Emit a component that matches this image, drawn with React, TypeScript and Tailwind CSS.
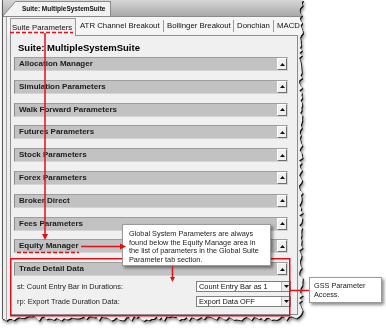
import React from 'react';

const sections = [
  'Allocation Manager',
  'Simulation Parameters',
  'Walk Forward Parameters',
  'Futures Parameters',
  'Stock Parameters',
  'Forex Parameters',
  'Broker Direct',
  'Fees Parameters',
  'Equity Manager',
];

// jagged "torn paper" outline for the right and bottom edges of the window grab
function tornEdge(): string {
  let s = 11;
  const rnd = () => {
    s = (s * 9301 + 49297) % 233280;
    return s / 233280;
  };
  const W = 301;
  const H = 322;
  const pts: string[] = ['0px 0px', `${W}px 0px`];
  for (let y = 3; y <= H - 6; y += 2.5) pts.push(`${(W - 4 + rnd() * 4).toFixed(1)}px ${y}px`);
  for (let x = W - 4; x >= 0; x -= 2.5) pts.push(`${x}px ${(H - 6 + rnd() * 5).toFixed(1)}px`);
  pts.push(`0px ${H - 3}px`);
  return `polygon(${pts.join(',')})`;
}

function UpButton() {
  return (
    <div className="w-[10px] h-[12px] bg-[#f0f0f0] border border-t-white border-l-white border-r-[#6e6e6e] border-b-[#6e6e6e] flex items-center justify-center">
      <svg width="5" height="3" viewBox="0 0 5 3">
        <polygon points="0,3 5,3 2.5,0" fill="#111" />
      </svg>
    </div>
  );
}

function SectionBar({ label }: { label: string }) {
  return (
    <div className="h-[14px] bg-[#c2c2c2] border border-t-[#9d9d9d] border-l-[#8c8c8c] border-r-[#d4d4d4] border-b-[#d4d4d4] flex items-center justify-between pl-[4px]">
      <span className="text-[8px] font-bold text-[#1c1c1c] leading-none">{label}</span>
      <UpButton />
    </div>
  );
}

function Dropdown({ value }: { value: string }) {
  return (
    <div className="w-[95px] h-[11.5px] bg-white border border-[#7f7f7f] flex items-center justify-between pl-[2px]">
      <span className="text-[7.4px] leading-none text-[#111]">{value}</span>
      <div className="w-[9px] h-full bg-[#ececec] border-l border-[#bdbdbd] flex items-center justify-center">
        <svg width="5" height="3" viewBox="0 0 5 3">
          <polygon points="0,0 5,0 2.5,3" fill="#111" />
        </svg>
      </div>
    </div>
  );
}

export default function App() {
  return (
    <div className="relative w-[386px] h-[329px] bg-white overflow-hidden font-['Liberation_Sans',Arial,sans-serif]">
      {/* window grab with torn edge + shadow */}
      <div className="ml-[2px] [filter:drop-shadow(1px_1px_0.5px_rgba(0,0,0,0.9))_drop-shadow(1.5px_2px_1.5px_rgba(0,0,0,0.45))]">
        <div
          className="w-[301px] h-[322px] bg-[#ededed] border-l border-[#5c5c5c] flex flex-col"
          style={{ clipPath: tornEdge() }}
        >
          {/* title strip */}
          <div className="h-[17px] flex items-end bg-gradient-to-b from-[#d6d6d6] to-[#a9a9a9] border-b border-[#8a8a8a]">
            <svg width="12" height="15" viewBox="0 0 12 15" className="shrink-0">
              <polygon points="0,15 12,1 12,15" fill="#f2f2f2" />
              <line x1="0" y1="15" x2="12" y2="1" stroke="#8a8a8a" strokeWidth="1" />
            </svg>
            <div className="h-[15px] w-[96px] bg-[#f2f2f2] border-t border-r border-[#8a8a8a] flex items-center pl-[7px]">
              <span className="text-[6.5px] font-bold text-[#111] leading-none">Suite: MultipleSystemSuite</span>
            </div>
          </div>

          {/* body */}
          <div className="flex-1 ml-[3px] border-l border-[#a5a5a5] flex flex-col">
            {/* tabs */}
            <div className="h-[18px] flex items-stretch pl-[3px] bg-[#f5f5f5]">
              <div className="relative z-10 w-[66px] -mb-[1px] mt-[1px] bg-[#f0f0f0] border border-b-0 border-[#9a9a9a] flex items-center pl-[1px]">
                <span className="text-[7.8px] text-[#111] leading-none">Suite Parameters</span>
              </div>
              <div className="w-[87px] flex items-center pl-[4px]">
                <span className="text-[7.8px] text-[#111] leading-none">ATR Channel Breakout</span>
              </div>
              <div className="w-[70px] my-[3px] border-l border-[#9a9a9a] flex items-center pl-[3px]">
                <span className="text-[7.8px] text-[#111] leading-none">Bollinger Breakout</span>
              </div>
              <div className="w-[40px] my-[3px] border-l border-[#9a9a9a] flex items-center pl-[3px]">
                <span className="text-[7.8px] text-[#111] leading-none">Donchian</span>
              </div>
              <div className="flex-1 my-[3px] border-l border-[#9a9a9a] flex items-center pl-[3px]">
                <span className="text-[7.8px] text-[#111] leading-none whitespace-nowrap">MACD</span>
              </div>
            </div>

            {/* panel */}
            <div className="ml-[3px] w-[288px] bg-[#f0f0f0] border border-[#8e8e8e] pl-[3px] pr-[9px] pt-[5.5px] pb-[7px]">
              <div className="h-[12px] flex items-center pl-[4px] mb-[3.5px]">
                <span className="text-[9.5px] font-bold text-black leading-none">Suite: MultipleSystemSuite</span>
              </div>
              <div className="flex flex-col gap-[8.8px]">
                {sections.map((s) => (
                  <SectionBar key={s} label={s} />
                ))}
                <div className="flex flex-col">
                  <SectionBar label="Trade Detail Data" />
                  <div className="mt-[4.8px] flex flex-col gap-[3.5px] pl-[3px] mr-[-3px]">
                    <div className="flex items-center justify-between">
                      <span className="text-[7.4px] text-[#1a1a1a] leading-none">st: Count Entry Bar in Durations:</span>
                      <Dropdown value="Count Entry Bar as 1" />
                    </div>
                    <div className="flex items-center justify-between">
                      <span className="text-[7.4px] text-[#1a1a1a] leading-none">rp: Export Trade Duration Data:</span>
                      <Dropdown value="Export Data OFF" />
                    </div>
                  </div>
                </div>
              </div>
            </div>
          </div>
        </div>
      </div>

      {/* red frame round the trade detail block */}
      <svg className="absolute left-0 top-0 pointer-events-none" width="386" height="329">
        <rect x="10.75" y="258.75" width="279" height="57" fill="none" stroke="#e3101a" strokeWidth="1.5" />
      </svg>

      {/* callouts */}
      <div className="absolute left-[122px] top-[224px] w-[149px] h-[42px] bg-white border border-[#9a9a9a] shadow-[2px_2px_3px_rgba(0,0,0,0.45)] pl-[6px] pt-[5px]">
        <p className="text-[7.3px] leading-[8.7px] text-[#222]">
          Global System Parameters are always
          <br />
          found below the Equity Manage area in
          <br />
          the list of parameters in the Global Suite
          <br />
          Parameter tab section.
        </p>
      </div>
      <div className="absolute left-[309px] top-[277px] w-[73px] h-[26px] bg-white border border-[#9a9a9a] shadow-[2px_2px_3px_rgba(0,0,0,0.45)] pl-[4px] pt-[4px]">
        <p className="text-[7.3px] leading-[8.7px] text-[#222]">
          GSS Parameter
          <br />
          Access.
        </p>
      </div>

      {/* red annotation lines */}
      <svg className="absolute left-0 top-0 pointer-events-none" width="386" height="329">
        <g stroke="#e3101a" strokeWidth="1.5" fill="none">
          <line x1="10" y1="32.5" x2="73" y2="32.5" strokeDasharray="4 2" />
          <line x1="45" y1="33" x2="45" y2="235" />
          <line x1="17" y1="252.5" x2="79" y2="252.5" strokeDasharray="4 2" />
          <line x1="81" y1="246.5" x2="121" y2="246.5" />
          <line x1="172.5" y1="266" x2="172.5" y2="278" />
          <line x1="290" y1="290.5" x2="309" y2="290.5" />
        </g>
        <g fill="#e3101a">
          <polygon points="42,234 48,234 45,240" />
          <polygon points="120,243.5 120,249.5 126,246.5" />
          <polygon points="170,277 175,277 172.5,282" />
        </g>
      </svg>
    </div>
  );
}
